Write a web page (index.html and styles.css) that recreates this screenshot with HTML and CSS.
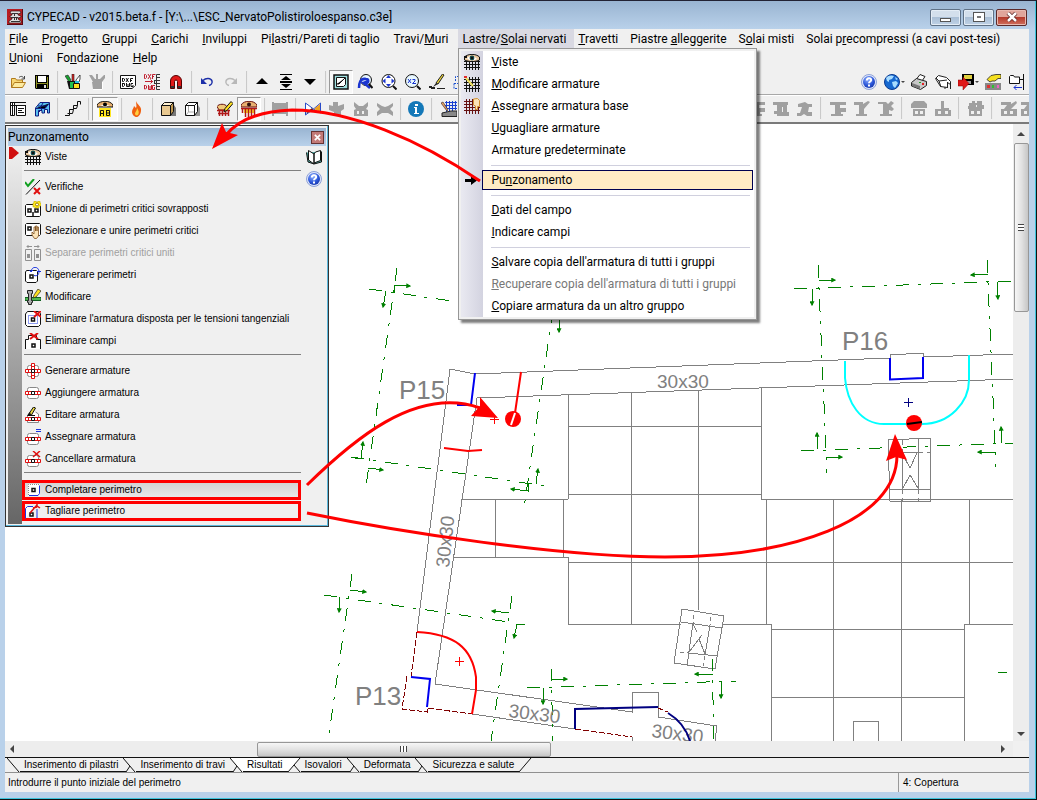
FILE: index.html
```html
<!DOCTYPE html>
<html lang="it">
<head>
<meta charset="utf-8">
<title>CYPECAD</title>
<link rel="stylesheet" href="styles.css">
</head>
<body>
<svg class="defs" aria-hidden="true">
  <defs>
    <radialGradient id="blueball" cx="0.4" cy="0.3" r="0.8"><stop offset="0" stop-color="#8fb0ff"/><stop offset="0.6" stop-color="#2a55d8"/><stop offset="1" stop-color="#1230a0"/></radialGradient>
    <symbol id="i-app" viewBox="0 0 16 16"><path fill="#b81c22" d="M0 0h16v16H0z"/><path fill="#5c0a10" d="M0 15h16v1H0zM15 0h1v16h-1z"/><path fill="#ddd" stroke="#311" stroke-width=".7" d="M4 2h9l1 2-3 1v1l3 1v1l-3 1v1l3 2v2H2v-2l3-2V9L3 8V7l2-1V5L3 4z"/><path stroke="#333" d="M5 4.500h6M4 8.500h7M4 12.500h9M7.500 5v2M7.500 9v2M9.500 9v2"/></symbol>
    <symbol id="i-open" viewBox="0 0 16 16"><path fill="#f7d774" stroke="#b07a1c" d="M1.500 13.500v-9h4l1 1.500h6v3"/><path fill="#fdeba0" stroke="#b07a1c" d="M1.500 13.500l3-5h11l-3 5z"/><path fill="none" stroke="#444" d="M9 3.500c2-2 4-1 5 1M14.500 2v3h-3"/></symbol>
    <symbol id="i-save" viewBox="0 0 16 16"><path d="M1 1h14v14H2l-1-1z"/><path fill="#8d8f20" d="M2 2h1v12H2zM13 3h1v11h-1zM3 9h10v1H3z"/><path fill="#fff" d="M4 2h8v6H4z"/><path fill="#ddd" d="M10 11h2v3h-2z"/></symbol>
    <symbol id="i-tools" viewBox="0 0 16 16"><path fill="#18a030" stroke="#222" stroke-width=".6" d="M0 2l3-1 3 5-2 2z"/><path fill="#e02020" stroke="#222" stroke-width=".6" d="M7 0h2v7H7z"/><path fill="#fff" stroke="#222" stroke-width=".8" d="M15 1l-4 5v2h3l1-3z"/><path fill="#111" d="M2 7h10l-1 8H4z"/><path fill="#20c050" d="M5 8h4v6H5z"/><path fill="#20c0e0" d="M10 7h4v2h-4z"/><path fill="#ffe020" stroke="#111" d="M8.500 9.500h6v5h-6z"/></symbol>
    <symbol id="i-toolsg" viewBox="0 0 16 16"><path fill="#a0a0a0" d="M0 1h3l3 4h1V0h2v5h2l4-4h1v3l-3 4h1l-1 7H4L3 8h1z"/><path fill="#fff" d="M4 15h9v1H4zM13 8h1v7h-1z"/></symbol>
    <symbol id="i-dxf" viewBox="0 0 16 16"><path fill="#fff" stroke="#111" d="M.500 1.500h15v10l-3 3H.500z"/><path fill="#999" d="M12 12h3l-3 3z"/><path stroke="#111" fill="none" d="M2.500 4v3.500h1l1-1V5l-1-.5h-1M6 4l2.500 4M8.500 4L6 8M10.500 8V4.500H13M10 6.500h2M2.500 9v3.500h1l1-1V9.500h-2M6.500 9v3.500h3V9M8 10v2M13 9.500h-2v3h2V11"/></symbol>
    <symbol id="i-dwg" viewBox="0 0 16 16"><path stroke="#c02030" fill="none" d="M.500.500v4h1l1-1v-2l-1-1h-1M4 0l3 5M7 0L4 5M8.500 5V.500h3M8 2.500h2M.500 11v4h1l1-1v-2l-1-.5h-1M4.500 11v4.500h3V11M6 12v3M11 11.500H8.500v4h2V13M1 7.500h8M6.500 5.500l2 2-2 2"/><path stroke="#333" fill="none" d="M16 .500h-3.500v15H16M12 3.500h4M10 6.500h6M10 9.500h6M12 12.500h4M10.500 6v4"/></symbol>
    <symbol id="i-magnet" viewBox="0 0 16 16"><path fill="#e01818" stroke="#500" d="M2.500 14.500V7a5.500 5.500 0 0 1 11 0v7.500h-4V7.500a1.500 1.500 0 0 0-3 0v7z"/><path fill="#333" d="M3 12h3v2H3zM10 12h3v2h-3z"/></symbol>
    <symbol id="i-undo" viewBox="0 0 16 16"><path fill="none" stroke="#1c2fa8" stroke-width="1.500" d="M4 6.500C7 3.500 12 4 13 7c.5 2-1 4-3 4.500"/><path fill="#1c2fa8" d="M2 4v6h6z"/></symbol>
    <symbol id="i-redo" viewBox="0 0 16 16"><path fill="none" stroke="#b8b8b8" stroke-width="1.500" d="M12 6.500C9 3.500 4 4 3 7c-.5 2 1 4 3 4.500"/><path fill="#b8b8b8" d="M14 4v6H8z"/></symbol>
    <symbol id="i-up" viewBox="0 0 16 16"><path d="M8 4l6 6H2z"/></symbol>
    <symbol id="i-down" viewBox="0 0 16 16"><path d="M8 11l6-6H2z"/></symbol>
    <symbol id="i-updown" viewBox="0 0 16 16"><path d="M2 0h12v1H2zM8 2l5 4H3zM2 7h12v2H2zM3 10h10l-5 4zM2 15h12v1H2z"/></symbol>
    <symbol id="i-win" viewBox="0 0 16 16"><path fill="#9fe0e0" stroke="#111" stroke-width="1.500" d="M1 1h14v14H1z"/><path fill="#fff" stroke="#111" d="M3.500 3.500h9v7l-2 2h-7z"/><path stroke="#111" d="M4 10l2 0 6-6"/></symbol>
    <symbol id="i-zprev" viewBox="0 0 16 16"><circle cx="9" cy="6" r="5.500" fill="#e8f6ff" stroke="#111"/><path stroke="#1a34d0" stroke-width="2.500" fill="none" d="M2 14c0-5 1-10 7-9 3 0 3 4 0 4H7l6 5"/><path fill="#1a34d0" d="M4 9l6-3v6z"/><path stroke="#111" stroke-width="2" d="M12 10l3.500 4"/></symbol>
    <symbol id="i-zall" viewBox="0 0 16 16"><circle cx="7.500" cy="7" r="6.500" fill="#fff" stroke="#111"/><path fill="#1a34d0" d="M7.500 1l2.500 3H5zM7.500 13l2.500-3H5zM1.500 7l3-2.500v5zM13.500 7l-3-2.500v5z"/><path stroke="#111" stroke-width="2" d="M12 12l3.500 3.500"/></symbol>
    <symbol id="i-z2" viewBox="0 0 16 16"><circle cx="7" cy="7" r="6.500" fill="#e8f8ff" stroke="#111"/><path stroke="#1a34d0" fill="none" d="M3 5l3 4M6 5L3 9M7.500 5.500h2.500v1.500L7.500 9.500H11"/><path stroke="#111" stroke-width="2" d="M12 12l3.500 3.500"/></symbol>
    <symbol id="i-brush" viewBox="0 0 16 16"><path fill="#f0d838" stroke="#222" d="M13.500 0l1.500 1-6 9-2-1z"/><path fill="#222" d="M9 10l-5 3 3-4zM0 12h3v1h3v2H2v-1H0zM8 14h8v1H8z"/></symbol>
    <symbol id="i-hand" viewBox="0 0 16 16"><path fill="none" stroke="#1a50d0" stroke-dasharray="2 1" d="M2.500 7V2.500H14M1 9.500h14v5H1z"/></symbol>
    <symbol id="i-help" viewBox="0 0 16 16"><circle cx="8" cy="8" r="7.500" fill="#dfe6fa" stroke="#8ea2d8"/><circle cx="8" cy="8" r="6" fill="url(#blueball)"/><path fill="none" stroke="#fff" stroke-width="2" d="M5.800 6.500c0-3 4.400-3 4.400-.5 0 1.500-2.200 1.500-2.200 3.200"/><path fill="#fff" d="M7 10.500h2v2H7z"/></symbol>
    <symbol id="i-globe" viewBox="0 0 16 16"><circle cx="8" cy="8" r="7.500" fill="#1668d0" stroke="#0a3a90"/><path fill="#a8dcff" d="M2 4c2-3 6-3 8-2l-2 3-3 1v2L3 7zM8 8l4-1 2 2-3 5-2-2zM11 3l3 2-2 1z"/></symbol>
    <symbol id="i-print" viewBox="0 0 16 16"><path fill="#fff" stroke="#222" d="M5.500 5L9 .500l5 2L11 7z"/><path fill="#c8c8c8" stroke="#222" d="M.500 8.500l5-4 10 3v4l-6 4-9-3.500z"/><path fill="#777" d="M1 9l8 3v3l-8-3z"/><path fill="#e02020" d="M11 9h2v2h-2z"/><path fill="#20a020" d="M8 8h2v1H8z"/></symbol>
    <symbol id="i-plot" viewBox="0 0 16 16"><path fill="#fff" stroke="#222" d="M.500 4.500l3-3 8 2 4 4v3l-3-2v5l-7-1z"/><path stroke="#222" fill="none" d="M1 4l3 3 2 6M4 7l8-1M12.500 8v6M15.500 10v5M10 13v2"/></symbol>
    <symbol id="i-export" viewBox="0 0 16 16"><path d="M4 0h12v11H4z"/><path fill="#e0d040" d="M6 1h8v4H6z"/><path fill="#999" d="M8 7h5v3H8z"/><path fill="#e01818" stroke="#800" stroke-width=".5" d="M0 6h5V3l6 6.500L5 16v-4H0z"/></symbol>
    <symbol id="i-config" viewBox="0 0 16 16"><path fill="#f5e020" stroke="#222" stroke-width=".8" d="M2 5.500L6 1.500l5-1h5v4h-3L10 7H7L5 8z"/><path fill="#888" d="M0 9h16v7H0z"/><path fill="#e03030" d="M2 11h3v3H2z"/><path fill="#30c030" d="M7 11h2v3H7z"/><path fill="#f060c0" d="M12 11h2v3h-2z"/></symbol>
    <symbol id="i-folderin" viewBox="0 0 16 16"><path fill="#fff" stroke="#111" d="M.500 9.500v-7l1-1h3l1 1.500h5v6.500z"/><path stroke="#111" d="M14.500 0v16M11 5.500h3"/><path fill="none" stroke="#1a34d0" d="M5 13.500h8M7.500 11L5 13.500 7.500 16"/></symbol>
    <symbol id="i-list" viewBox="0 0 16 16"><path fill="#fff" stroke="#111" d="M.500 1.500h4v13h-4zM6.500 4.500h9v10h-9z"/><path stroke="#111" d="M0 1.500h16M0 4.500h16M2.500 2v12M8 7.500h6M8 9.500h4M8 11.500h6"/></symbol>
    <symbol id="i-build" viewBox="0 0 16 16"><path fill="#58c0f0" stroke="#101c80" d="M1.500 15V7L6 1.500h9.500V12h-2V8.500h-3V12H8V9.500H4.500V15z"/><path stroke="#101c80" d="M1 7.500h10l4-5M4 5h9M9 2L6 7M5 11l3-3"/></symbol>
    <symbol id="i-stairs" viewBox="0 0 16 16"><path fill="none" stroke="#111" d="M15.500 .500h-3v4h-4v4h-4v4h-2M15.500 .500v3M12.500 4.500l-1 3h-3M8.500 8.500l-1 4h-3v2H0"/></symbol>
    <symbol id="i-eyeab" viewBox="0 0 16 16"><path fill="#e8b070" stroke="#111" d="M0 4c3-5 13-5 16 0v2H0z"/><path fill="#fff" d="M3 4h10L8 6z"/><circle cx="8" cy="3.500" r="2"/><path fill="#ffe620" d="M2 7h12v9H2z"/><path fill="none" stroke="#111" d="M3.500 15V9.500h3V15M4 12.500h2M9.500 9v5.500h3V9.500h-3M9.500 12h3"/></symbol>
    <symbol id="i-fire" viewBox="0 0 16 16"><path fill="#f06010" d="M7 0c1 4 6 5 5 10-.5 4-3 6-4.500 6S3 14 3 11c0-3 2-4 2-6l2 2c1-2 0-4 0-7z"/><path fill="#ffd040" d="M8 7c2 3 2 4 1.500 6-.5 2-3.500 2-3.500-.5C6 11 8 10 8 7z"/></symbol>
    <symbol id="i-cube" viewBox="0 0 16 16"><path fill="#777" d="M14 4l2 3v8H5l-2-1z"/><path fill="#e8c890" stroke="#111" d="M1.500 4.500h9v10h-9z"/><path fill="#fff0d0" stroke="#111" d="M1.500 4.500l3-3h9l-3 3z"/><path fill="#c09850" stroke="#111" d="M10.500 4.500l3-3v9l-3 4z"/></symbol>
    <symbol id="i-cubew" viewBox="0 0 16 16"><path fill="#999" d="M14 4l2 3v8H5l-2-1z"/><path fill="#fff" stroke="#111" d="M1.500 4.500h9v10h-9zM1.500 4.500l3-3h9l-3 3zM10.500 4.500l3-3v9l-3 4z"/><path fill="none" stroke="#aaa" d="M4.500 5v6L2 14M5 11h5"/></symbol>
    <symbol id="i-rpencil" viewBox="0 0 16 16"><path fill="#f0c878" stroke="#611" d="M0 5.500c2-3 8-3 10 0L8 9H2z"/><path stroke="#b01818" stroke-width="1.500" fill="none" d="M0 9.500h13M2.500 9v6M5.500 9v6M8.500 9v6M11.500 9v6M1 12.500h11"/><path fill="#ffe020" stroke="#111" d="M14 .500l2 2-6 7-3 1 1-3z"/></symbol>
    <symbol id="i-reye" viewBox="0 0 16 16"><path fill="#e8b070" stroke="#611" d="M0 4c3-5 13-5 16 0v2H0z"/><circle cx="8" cy="3.500" r="2" fill="#301010"/><path fill="#ffd820" d="M3 7h11v5H3z"/><path stroke="#b01818" stroke-width="1.500" fill="none" d="M0 7.500h16M1.500 7v5M4.500 8v8M7.500 8v8M10.500 8v8M13.500 8v7"/></symbol>
    <symbol id="i-g1" viewBox="0 0 16 16"><path fill="#a0a0a0" d="M0 1h2v1h12V1h2v14h-2v-2H2v2H0z"/></symbol>
    <symbol id="i-bow" viewBox="0 0 16 16"><path fill="#fff" stroke="#2a4bc8" d="M.500 2l8 6 7-6v10l-7-4-8 6z"/><path fill="#f0a020" d="M9 8l6-5v8z"/><path fill="#222" d="M0 13l7-6 1 2z"/></symbol>
    <symbol id="i-g2" viewBox="0 0 16 16"><path fill="#a0a0a0" d="M0 4l4 1V1h5v4l6-2v5l-3 2v5H5v-4L0 9z"/></symbol>
    <symbol id="i-g3" viewBox="0 0 16 16"><path fill="#a0a0a0" d="M1 1l5 4h4l5-4v4l-2 3 2 1v6H1V9l2-1-2-3z"/><path fill="#f0f0f0" d="M4 10h2v3H4zM9 10h2v3H9z"/></symbol>
    <symbol id="i-g4" viewBox="0 0 16 16"><path fill="#a0a0a0" d="M0 2l5 3 3 1 3-1 5-3v3l-3 3 3 3v4l-5-3H5l-5 3v-4l3-3-3-3z"/></symbol>
    <symbol id="i-info" viewBox="0 0 16 16"><circle cx="8" cy="8" r="8" fill="#1478b8"/><path fill="#fff" d="M7 3h3v2H7zM6 6h3v6h2v1H6v-1h1V7H6z"/></symbol>
    <symbol id="i-site" viewBox="0 0 16 16"><path stroke="#1a40d0" fill="none" d="M5.500 0v11M8.500 0v11M11.500 0v10M14.500 0v9M4 1.500h12M4 4.500h12M4 7.500h12"/><path fill="#888" stroke="#222" d="M1 12l9-2h6v5.500H1z"/><path fill="#f0a060" stroke="#222" stroke-width=".6" d="M0 2l2-1 5 8-1 1z"/></symbol>
    <symbol id="i-ga" viewBox="0 0 16 16"><path fill="#a0a0a0" d="M0 1h15v3h-1v7h2v4H4v-2H1v-3h3V4H0z"/><path fill="#f0f0f0" d="M9 6h1v5H9z"/></symbol>
    <symbol id="i-gb" viewBox="0 0 16 16"><path fill="#a0a0a0" d="M1 3l7-2 3 2h4v3h-3l-1 5h4v4h-5l-3-2-3 2H0v-3h3l2-6H1z"/></symbol>
    <symbol id="i-gc" viewBox="0 0 16 16"><path fill="#a0a0a0" d="M0 1h16v3h-6v3h6v4h-5v2h2v2H1v-2h4V4H0z"/></symbol>
    <symbol id="i-gd" viewBox="0 0 16 16"><path fill="#a0a0a0" d="M0 1h9v2l5-3 2 1-6 7v5h3v2H2v-2h3V4H0z"/></symbol>
    <symbol id="i-ge" viewBox="0 0 16 16"><path fill="#a0a0a0" d="M0 1h8l2 2 3-3 3 2-3 3 3 3-2 2-3-1v4h3v2H2v-2h3V3H0z"/></symbol>
    <symbol id="i-gf" viewBox="0 0 16 16"><path fill="#a0a0a0" d="M3 0h10l3 3v4h-2v8H2V7H0V3z"/><path fill="#f0f0f0" d="M2 7h12v1H2zM4 10h3v3H4zM9 10h3v3H9z"/></symbol>
    <symbol id="i-gg" viewBox="0 0 16 16"><path fill="#a0a0a0" d="M6 0h3v7h5v2h2v6H0V8h6z"/><path fill="#f0f0f0" d="M3 10h3v3H3zM10 10h3v3h-3z"/></symbol>
    <symbol id="i-gh" viewBox="0 0 16 16"><path fill="#a0a0a0" d="M1 2h3V0h3v2h2V0h5v4h2v4h-2v7H1V8H0V5h1z"/><path fill="#f0f0f0" d="M3 10h3v3H3zM9 10h3v3H9zM8 4h1v2H8z"/></symbol>
    <symbol id="i-gi" viewBox="0 0 16 16"><path fill="#a0a0a0" d="M0 1h10v2l5-3 1 2-6 6h6v7H0V8h3l3-4H0z"/><path fill="#f0f0f0" d="M3 10h3v3H3zM9 10h3v3H9z"/></symbol>
    <symbol id="i-viste" viewBox="0 0 16 16"><path stroke="#111" d="M0 7.500h16M0 10.500h16M0 13.500h16M2.500 5v11M5.500 5v11M8.500 5v11M11.500 5v11M14.500 5v11"/><path fill="#e8c8a0" stroke="#111" d="M.500 3C4-.500 12-.500 15.500 3v3c-4 2-11 2-15 0z"/><path fill="#fff" d="M3 4c3-3 8-2 10 1-3 2-8 2-10-1z"/><circle cx="8" cy="4" r="2.400" fill="#104848"/><path fill="#111" d="M0 2h3v2H0zM7 3h2v2H7z"/></symbol>
    <symbol id="i-modarm" viewBox="0 0 16 16"><path stroke="#111" d="M0 3.500h16M0 6.500h16M0 9.500h16M0 12.500h16M2.500 1v15M5.500 1v15M8.500 1v15M11.500 1v15M14.500 1v15"/><path stroke="#f0e060" stroke-width="2" d="M2 2l7 8"/><path fill="#e03030" d="M0 0h3v2H0z"/></symbol>
    <symbol id="i-assbase" viewBox="0 0 16 16"><path stroke="#611" d="M0 3.500h10M0 6.500h10M0 9.500h16M0 12.500h16M2.500 1v15M5.500 1v15M8.500 1v15M11.500 9v7M14.500 9v7"/><path fill="#fce4b8" stroke="#d09030" d="M9.500 1l4-.5 2 2v6h-2v3h-2V8l-2-1z"/></symbol>
    <symbol id="i-arrow" viewBox="0 0 16 16"><path d="M1 7h6V4l6 4.500L7 13v-3H1z"/></symbol>
    <symbol id="i-verif" viewBox="0 0 16 16"><path stroke="#111" d="M15 1L1 15.500"/><path fill="none" stroke="#10a020" stroke-width="2" d="M0 3l3 4 6-7"/><path fill="none" stroke="#e01010" stroke-width="2" d="M9 9l6 6M15 9l-6 6"/></symbol>
    <symbol id="i-unione" viewBox="0 0 16 16"><path fill="#fff" stroke="#111" d="M.500 4.500l1-1h13l1 1v10l-1 1h-13l-1-1z"/><path fill="none" stroke="#111" stroke-width="1.500" d="M3 8h3v3H3zM10 8h3v3h-3zM8 11v4"/><path fill="#ffe820" stroke="#b0a000" stroke-width=".5" d="M9 0h2v1h2V0h2v2h1v3h-2v2h-4V6H8V2h1z"/><circle cx="12" cy="3.500" r="1.500" fill="#fff" stroke="#a08000"/></symbol>
    <symbol id="i-selez" viewBox="0 0 16 16"><path fill="#fff" stroke="#111" d="M.500 1.500l1-1h13l1 1v10l-1 1h-13l-1-1z"/><path fill="none" stroke="#111" stroke-width="1.500" d="M3 4h3v3H3z"/><path fill="#fce4b8" stroke="#805020" stroke-width=".8" d="M7 9l2 2V4h1.500v4V3H12v5V4h1.500v9l-2 2.500h-2L7 12z"/></symbol>
    <symbol id="i-separ" viewBox="0 0 16 16"><path fill="none" stroke="#909090" d="M.500 4.500h6v11h-6zM9.500 4.500h6v11h-6zM2 1.500h5M9 1.500h5M3.500 0L2 1.500 3.500 3M12.500 0L14 1.500 12.500 3"/><path fill="#909090" d="M2 9h3v4H2zM11 9h3v4h-3z"/></symbol>
    <symbol id="i-rigen" viewBox="0 0 16 16"><path fill="#fff" stroke="#111" d="M.500 5l1-1.500h10l1 1V14l-1.500 1.500h-9L.500 14z"/><path fill="none" stroke="#111" stroke-width="1.500" d="M5 8h3v3H5z"/><path fill="none" stroke="#1a34e0" d="M6 4.500C7-1 13-1 14 4M12 4.500h4M4.500 3L6 5l2-2M9 8.500c3 1 5-1 5-4"/></symbol>
    <symbol id="i-modif" viewBox="0 0 16 16"><path fill="#50b850" stroke="#106020" d="M0 8.500h16v3H0z"/><path fill="#aaa" stroke="#222" d="M2.500 1.500h5v3h-1v7h1v2h-1v2h-3v-2h-1v-2h1v-7h-1z"/><path fill="#ffe020" stroke="#222" stroke-width=".7" d="M13 0l3 2-5 6-3 1 1-3z"/></symbol>
    <symbol id="i-elimarm" viewBox="0 0 16 16"><path fill="#fff" stroke="#111" d="M.500 3l2-2.500h11l2 2v11l-2 2h-11l-2-2z"/><path fill="none" stroke="#1a34e0" stroke-dasharray="1 1" d="M3.500 4.500h9v8h-9z"/><path fill="none" stroke="#111" stroke-width="1.500" d="M6.500 7h3v3h-3z"/><path stroke="#e01010" stroke-width="2" d="M9 0l7 6M16 0L9 6"/></symbol>
    <symbol id="i-elimcam" viewBox="0 0 16 16"><path fill="#fff" stroke="#111" d="M.500 16V6.500h3v-4h8v4h4V16"/><path fill="none" stroke="#111" stroke-width="1.500" d="M7 11h3v3H7z"/><path stroke="#e01010" stroke-width="2" d="M5 0l8 6M13 0L5 6"/></symbol>
    <symbol id="i-gener" viewBox="0 0 16 16"><rect x="2.500" y="2.500" width="11" height="11" rx="2" fill="#fff" stroke="#888"/><path fill="#fff" stroke="#e01010" d="M6.500.500h3v15h-3zM.500 6.500h15v3H.500zM6.500 3.500h3M6.500 12.500h3M3.500 6.500v3M12.500 6.500v3"/><path fill="#fff" stroke="#111" d="M6.500 6.500h3v3h-3z"/></symbol>
    <symbol id="i-aggiu" viewBox="0 0 16 16"><rect x="2.500" y="2.500" width="11" height="11" rx="2" fill="#fff" stroke="#888"/><path fill="#fff" stroke="#e01010" d="M.500 6.500h15v3H.500zM3.500 6.500v3M12.500 6.500v3"/><path fill="#fff" stroke="#111" d="M6.500 6.500h3v3h-3z"/></symbol>
    <symbol id="i-edita" viewBox="0 0 16 16"><path fill="#fff" stroke="#888" d="M2.500 8v7.500h11V7l-3-2"/><path fill="#fff" stroke="#e01010" d="M.500 10.500h15v3H.500zM3.500 10.500v3M12.500 10.500v3"/><path fill="#fff" stroke="#111" d="M6.500 10.500h3v3h-3z"/><path fill="#e8d840" stroke="#111" d="M8.500 0l2 1-4 7H4L3 8z"/><path fill="#111" d="M2 9l3-4 1 3h4v1z"/></symbol>
    <symbol id="i-assar" viewBox="0 0 16 16"><rect x="2.500" y="4.500" width="11" height="11" rx="2" fill="#fff" stroke="#888"/><path fill="#fff" stroke="#e01010" d="M.500 8.500h15v3H.500zM3.500 8.500v3M12.500 8.500v3"/><path fill="#fff" stroke="#111" d="M6.500 8.500h3v3h-3z"/><path fill="#1a34e0" d="M11 0h5v1h-5zM11 2h5v1h-5z"/></symbol>
    <symbol id="i-cancar" viewBox="0 0 16 16"><rect x="2.500" y="4.500" width="11" height="11" rx="2" fill="#fff" stroke="#888"/><path fill="#fff" stroke="#e01010" d="M.500 8.500h15v3H.500zM3.500 8.500v3M12.500 8.500v3"/><path fill="#fff" stroke="#111" d="M6.500 8.500h3v3h-3z"/><path stroke="#e01010" stroke-width="1.500" d="M8 0l7 6M15 0L8 6"/></symbol>
    <symbol id="i-compl" viewBox="0 0 16 16"><path fill="#fff" d="M3 2h12v12H3z"/><path fill="none" stroke="#1a34e0" d="M4 13.500h9l1.500-2v-8"/><path fill="none" stroke="#888" stroke-dasharray="1 1" d="M3.500 13V2.500H14"/><path fill="none" stroke="#111" stroke-width="1.500" d="M7 6.500h3v3H7z"/></symbol>
    <symbol id="i-tagli" viewBox="0 0 16 16"><path fill="#fff" stroke="#1a34e0" d="M.500 15.500v-10l2-2H8M12 6v9"/><path fill="#fff" stroke="#111" stroke-width="1.500" d="M5 10h3v3H5z"/><path fill="none" stroke="#e01010" stroke-width="1.500" d="M5 10l7-8M12 0v3l3 2M8 5l4-1"/></symbol>
    <symbol id="i-book" viewBox="0 0 16 16"><path fill="#4fb0a8" stroke="#111" d="M.500 3.500L2 13l6 2 7.500-2V2.500"/><path fill="#fff" stroke="#111" d="M2.500 1.500L8 5v10L2.500 11zM8 5l1.500-2 5-1.500v10L8 14z"/></symbol>
    <symbol id="i-xs" viewBox="0 0 8 8"><path stroke="#fff" stroke-width="2" d="M1 1l6 6M7 1L1 7"/></symbol>
    <marker id="tip" viewBox="0 0 4 4" refX="3" refY="2" markerWidth="5" markerHeight="5" markerUnits="userSpaceOnUse" orient="auto"><path fill="#008000" d="M0 0l4 2-4 2z"/></marker>
  </defs>
</svg>

<div class="window">
  <header class="titlebar">
    <svg class="ico"><use href="#i-app"/></svg>
    <h1 class="title">CYPECAD - v2015.beta.f - [Y:\...\ESC_NervatoPolistiroloespanso.c3e]</h1>
    <div class="caption">
      <button class="cap" aria-label="Riduci a icona"><span class="glyph-min"></span></button>
      <button class="cap" aria-label="Ingrandisci"><span class="glyph-max"></span></button>
      <button class="cap cap-close" aria-label="Chiudi"><svg width="12" height="10" viewBox="0 0 12 10"><path stroke="#5a2020" stroke-width="4" d="M2 1l8 8M10 1L2 9"/><path stroke="#fff" stroke-width="2.500" d="M2 1l8 8M10 1L2 9"/></svg></button>
    </div>
  </header>

  <div class="client">
    <nav class="menubar">
      <div class="mi"><button class="mbtn"><u>F</u>ile</button></div>
      <div class="mi"><button class="mbtn"><u>P</u>rogetto</button></div>
      <div class="mi"><button class="mbtn"><u>G</u>ruppi</button></div>
      <div class="mi"><button class="mbtn"><u>C</u>arichi</button></div>
      <div class="mi"><button class="mbtn"><u>I</u>nviluppi</button></div>
      <div class="mi"><button class="mbtn">Pi<u>l</u>astri/Pareti di taglio</button></div>
      <div class="mi"><button class="mbtn">Travi/<u>M</u>uri</button></div>
      <div class="mi mi-tight">
        <button class="mbtn mbtn-open" aria-expanded="true">Lastre/<u>S</u>olai nervati</button>
        <div class="dropdown">
          <button class="dd"><svg class="ico"><use href="#i-viste"/></svg><span><u>V</u>iste</span></button>
          <button class="dd"><svg class="ico"><use href="#i-modarm"/></svg><span><u>M</u>odificare armature</span></button>
          <button class="dd"><svg class="ico"><use href="#i-assbase"/></svg><span><u>A</u>ssegnare armatura base</span></button>
          <button class="dd"><i class="ico"></i><span><u>U</u>guagliare armature</span></button>
          <button class="dd"><i class="ico"></i><span>Armature <u>p</u>redeterminate</span></button>
          <hr class="dsep">
          <button class="dd dd-active"><svg class="ico"><use href="#i-arrow"/></svg><span>Pu<u>n</u>zonamento</span></button>
          <hr class="dsep">
          <button class="dd"><i class="ico"></i><span><u>D</u>ati del campo</span></button>
          <button class="dd"><i class="ico"></i><span><u>I</u>ndicare campi</span></button>
          <hr class="dsep">
          <button class="dd"><i class="ico"></i><span><u>S</u>alvare copia dell'armatura di tutti i gruppi</span></button>
          <button class="dd" disabled><i class="ico"></i><span><u>R</u>ecuperare copia dell'armatura di tutti i gruppi</span></button>
          <button class="dd"><i class="ico"></i><span><u>C</u>opiare armatura da un altro gruppo</span></button>
        </div>
      </div>
      <div class="mi mi-tight"><button class="mbtn"><u>T</u>ravetti</button></div>
      <div class="mi mi-tight"><button class="mbtn">Piastre <u>a</u>lleggerite</button></div>
      <div class="mi mi-tight"><button class="mbtn">S<u>o</u>lai misti</button></div>
      <div class="mi mi-tight"><button class="mbtn">Solai p<u>r</u>ecompressi (a cavi post-tesi)</button></div>
      <div class="mi"><button class="mbtn"><u>U</u>nioni</button></div>
      <div class="mi"><button class="mbtn">Fo<u>n</u>dazione</button></div>
      <div class="mi"><button class="mbtn"><u>H</u>elp</button></div>
    </nav>

    <div class="toolbar">
      <button class="tb" aria-label="Apri"><svg class="ico"><use href="#i-open"/></svg></button>
      <button class="tb" aria-label="Salva"><svg class="ico"><use href="#i-save"/></svg></button>
      <i class="ts"></i>
      <button class="tb" aria-label="Strumenti"><svg class="ico"><use href="#i-tools"/></svg></button>
      <button class="tb" aria-label="Strumenti gruppo" disabled><svg class="ico"><use href="#i-toolsg"/></svg></button>
      <i class="ts"></i>
      <button class="tb" aria-label="DXF"><svg class="ico"><use href="#i-dxf"/></svg></button>
      <button class="tb" aria-label="DXF DWG"><svg class="ico"><use href="#i-dwg"/></svg></button>
      <button class="tb" aria-label="Cattura"><svg class="ico"><use href="#i-magnet"/></svg></button>
      <i class="ts"></i>
      <button class="tb" aria-label="Annulla"><svg class="ico"><use href="#i-undo"/></svg></button>
      <button class="tb" aria-label="Ripeti" disabled><svg class="ico"><use href="#i-redo"/></svg></button>
      <i class="ts"></i>
      <button class="tb" aria-label="Sali"><svg class="ico"><use href="#i-up"/></svg></button>
      <button class="tb" aria-label="Vai al gruppo"><svg class="ico"><use href="#i-updown"/></svg></button>
      <button class="tb" aria-label="Scendi"><svg class="ico"><use href="#i-down"/></svg></button>
      <i class="ts"></i>
      <button class="tb tb-on" aria-label="Finestra"><svg class="ico"><use href="#i-win"/></svg></button>
      <button class="tb" aria-label="Zoom precedente"><svg class="ico"><use href="#i-zprev"/></svg></button>
      <button class="tb" aria-label="Zoom totale"><svg class="ico"><use href="#i-zall"/></svg></button>
      <button class="tb" aria-label="Zoom per due"><svg class="ico"><use href="#i-z2"/></svg></button>
      <button class="tb" aria-label="Ridisegna"><svg class="ico"><use href="#i-brush"/></svg></button>
      <button class="tb" aria-label="Stampa vista"><svg class="ico"><use href="#i-hand"/></svg></button>
      <div class="right">
        <button class="tb" aria-label="Aiuto"><svg class="ico"><use href="#i-help"/></svg></button>
        <button class="tb tb-drop" aria-label="Web"><svg class="ico"><use href="#i-globe"/></svg></button>
        <button class="tb" aria-label="Stampa"><svg class="ico"><use href="#i-print"/></svg></button>
        <button class="tb" aria-label="Disegni"><svg class="ico"><use href="#i-plot"/></svg></button>
        <button class="tb tb-drop" aria-label="Esporta"><svg class="ico"><use href="#i-export"/></svg></button>
        <button class="tb" aria-label="Configurazione"><svg class="ico"><use href="#i-config"/></svg></button>
        <button class="tb" aria-label="Esci"><svg class="ico"><use href="#i-folderin"/></svg></button>
      </div>
    </div>

    <div class="toolbar toolbar-2">
      <button class="tb" aria-label="Elenco"><svg class="ico"><use href="#i-list"/></svg></button>
      <button class="tb" aria-label="Struttura"><svg class="ico"><use href="#i-build"/></svg></button>
      <i class="ts"></i>
      <button class="tb" aria-label="Scale"><svg class="ico"><use href="#i-stairs"/></svg></button>
      <i class="ts"></i>
      <button class="tb tb-on tb-wide" aria-label="Vista testi"><svg class="ico"><use href="#i-eyeab"/></svg></button>
      <i class="ts"></i>
      <button class="tb" aria-label="Incendio"><svg class="ico"><use href="#i-fire"/></svg></button>
      <i class="ts"></i>
      <button class="tb" aria-label="Vista 3D"><svg class="ico"><use href="#i-cube"/></svg></button>
      <button class="tb" aria-label="Vista 3D gruppo"><svg class="ico"><use href="#i-cubew"/></svg></button>
      <i class="ts ts-9"></i>
      <button class="tb" aria-label="Modifica armature"><svg class="ico"><use href="#i-rpencil"/></svg></button>
      <button class="tb tb-on" aria-label="Vista armature"><svg class="ico"><use href="#i-reye"/></svg></button>
      <i class="ts"></i>
      <button class="tb" aria-label="Trave" disabled><svg class="ico"><use href="#i-g1"/></svg></button>
      <i class="ts ts-9"></i>
      <button class="tb" aria-label="Inviluppi"><svg class="ico"><use href="#i-bow"/></svg></button>
      <button class="tb" aria-label="Unisci" disabled><svg class="ico"><use href="#i-g2"/></svg></button>
      <button class="tb" aria-label="Copia" disabled><svg class="ico"><use href="#i-g3"/></svg></button>
      <button class="tb" aria-label="Dividi" disabled><svg class="ico"><use href="#i-g4"/></svg></button>
      <i class="ts"></i>
      <button class="tb" aria-label="Informazioni"><svg class="ico"><use href="#i-info"/></svg></button>
      <i class="ts ts-9"></i>
      <button class="tb" aria-label="Fondazione"><svg class="ico"><use href="#i-site"/></svg></button>
      <div class="right">
        <button class="tb" aria-label="Plinto" disabled><svg class="ico"><use href="#i-gc"/></svg></button>
        <button class="tb" aria-label="Plinto nuovo" disabled><svg class="ico"><use href="#i-ga"/></svg></button>
        <button class="tb" aria-label="Plinto ruotato" disabled><svg class="ico"><use href="#i-gb"/></svg></button>
        <i class="ts ts-9"></i>
        <button class="tb" aria-label="Cordolo" disabled><svg class="ico"><use href="#i-gc"/></svg></button>
        <button class="tb" aria-label="Modifica cordolo" disabled><svg class="ico"><use href="#i-gd"/></svg></button>
        <button class="tb" aria-label="Elimina cordolo" disabled><svg class="ico"><use href="#i-ge"/></svg></button>
        <i class="ts ts-9"></i>
        <button class="tb" aria-label="Pali" disabled><svg class="ico"><use href="#i-gf"/></svg></button>
        <button class="tb" aria-label="Palo singolo" disabled><svg class="ico"><use href="#i-gg"/></svg></button>
        <i class="ts ts-9"></i>
        <button class="tb" aria-label="Cerca" disabled><svg class="ico"><use href="#i-gh"/></svg></button>
        <i class="ts ts-9"></i>
        <button class="tb" aria-label="Modifica pali" disabled><svg class="ico"><use href="#i-gi"/></svg></button>
        <button class="tb tb-cut" aria-label="Altro" disabled><svg class="ico"><use href="#i-gi"/></svg></button>
      </div>
    </div>

    <main class="workspace">
      <svg class="plan" role="img" aria-label="Pianta">
        <g transform="translate(-5 -124)" fill="none">
          <g stroke="#808080" shape-rendering="crispEdges">
            <path d="M450 369L475 374 890 358M923 357L1013 354M890 358V354.500L923 353.500V357M477 398L1013 379M450 369L417 632M477 398L435 684M435 684L632 712V692H658V717L717 726 715 741M472 714L575 729M632 737v4"/>
            <path d="M461 499.500h107M568.500 394v105M495.500 499v58M563.500 499v58M453 557.500h115.500V624.500M568 426.500h193M568 494.500h193M631.500 392v232M698.500 390v220M761.500 387v112.500H1013M766.500 499v125M833.500 499v242M901.500 499v242M969.500 499v125M568 562.500h445M568 624.500h113M723 624.500h48.500V741M771 629.500h193M771 697.500h193M1013 624.500h-48.500V741M853.500 741v-20h25v20"/>
            <path d="M888 440L930 438 931 501H890zM902 452v37M918 438v51M890 489h41M902 452h16M902 453l8 15 7-15M903 488l7-13 8 13"/>
            <path stroke-dasharray="5 4" d="M902 440v12M918 452h12M902 489v12M918 489v12"/>
            <path d="M682 609L724 616 715 669 674 663zM681 622l41 6M689 653l28 3M693 623l-6 43M710 625l-5 30M693 624l4 8M702 635l-3 4-10 13M699 639l6 15"/>
            <path stroke-dasharray="4 3" d="M694 615l-1 8M710 617v8M680 652l9 1M705 656l-2 10"/>
          </g>
          <g stroke="#800000" shape-rendering="crispEdges">
            <path stroke-dasharray="6 2" d="M417 632L411 677M407 676L402 709 427 712V708L472 714M575 729L632 737M658 708l10 4"/>
          </g>
          <g stroke="#008000" shape-rendering="crispEdges">
            <g stroke-dasharray="13 9 3 9">
              <path d="M397 268L366 486M369 289L459 302M553 310L524 508M351 457L552 487"/>
              <path d="M818 265L827 473M794 289L1013 281M987 260L996 467M801 451L1013 443"/>
              <path d="M352 574L328 741M324 595L509 622M512 596L491 741"/>
              <path d="M551 668L553 741M527 688L736 681M712 658L714 741"/>
            </g>
            <path d="M998 672.500h9"/>
            <g marker-end="url(#tip)">
              <path d="M394 293L395 285 410 286"/><path d="M386 291L383 307"/><path d="M559 316V332"/><path d="M368 468L383 470"/><path d="M355 458L361 458 363 442"/><path d="M528 483V491L511 489"/><path d="M536 484L538 469"/>
              <path d="M819 280H835"/><path d="M812 289V305"/><path d="M988 274L971 275"/><path d="M997 282L998 299"/><path d="M817 449V433"/><path d="M826 457H842"/><path d="M995 452H978"/><path d="M1002 443L1001 427"/>
              <path d="M350 590L366 592"/><path d="M340 597L339 612"/><path d="M509 613L492 611"/><path d="M525 624H517L514 638"/>
              <path d="M551 679H567"/><path d="M543 688V704"/><path d="M713 674H695"/><path d="M721 682V698"/>
            </g>
          </g>
          <g fill="#808080" class="lbl">
            <text class="lbl-p" x="399" y="399">P15</text>
            <text class="lbl-p" x="842" y="350">P16</text>
            <text class="lbl-p" x="355" y="705">P13</text>
            <text x="657" y="388">30x30</text>
            <text transform="translate(449 568) rotate(-84)">30x30</text>
            <text transform="translate(508 717) rotate(7)">30x30</text>
            <text transform="translate(651 737) rotate(7)">30x30</text>
          </g>
          <g stroke="#0000f0" stroke-width="2">
            <path d="M890 358V379.500L923 378V357M475 373L471 405 457 405M411 677L430 679 427 707"/>
          </g>
          <g stroke="#000080" stroke-width="2">
            <path d="M575 729V709L658 707M668 713C678 719 686 728 690 741"/>
            <path stroke-width="1" d="M904 402.500h9M908.500 398v9"/>
          </g>
          <path stroke="#00ffff" stroke-width="2" d="M845 361V378C847 402 860 424 884 424H922C950 424 969 402 969 380V355"/>
          <g stroke="#ff0000" stroke-width="2">
            <path d="M417 632C455 634 472 648 476 677V690L472 714M521 372L515 413M444 448L468 451 482 450"/>
            <path stroke-width="1" shape-rendering="crispEdges" d="M455 661.500h9M459.500 657v9M490 419.500h9M494.500 415v9"/>
          </g>
          <circle cx="513" cy="419" r="8" fill="#f00"/><path stroke="#fff" stroke-width="2" d="M515 413L511 425"/>
          <circle cx="914" cy="423" r="8" fill="#f00"/><path stroke="#000" stroke-width="2" d="M907 424L922 422"/>
        </g>
      </svg>

      <div class="vscroll">
        <i class="tri tri-up"></i>
        <div class="vthumb"><i class="grip-v"></i></div>
        <i class="tri tri-down"></i>
      </div>
      <div class="hscroll">
        <i class="tri tri-left"></i>
        <div class="hthumb"><i class="grip-h"></i></div>
        <i class="tri tri-right"></i>
      </div>

      <section class="panel">
        <header class="panel-head"><h2 class="panel-title">Punzonamento</h2><button class="panel-x" aria-label="Chiudi pannello"><svg width="7" height="7" viewBox="0 0 8 8"><use href="#i-xs"/></svg></button></header>
        <div class="panel-body">
          <div class="strip"><i class="mark"></i></div>
          <div class="items">
            <button class="pi"><svg class="ico"><use href="#i-viste"/></svg>Viste</button>
            <hr class="psep">
            <button class="pi"><svg class="ico"><use href="#i-verif"/></svg>Verifiche</button>
            <button class="pi"><svg class="ico"><use href="#i-unione"/></svg>Unione di perimetri critici sovrapposti</button>
            <button class="pi"><svg class="ico"><use href="#i-selez"/></svg>Selezionare e unire perimetri critici</button>
            <button class="pi" disabled><svg class="ico"><use href="#i-separ"/></svg>Separare perimetri critici uniti</button>
            <button class="pi"><svg class="ico"><use href="#i-rigen"/></svg>Rigenerare perimetri</button>
            <button class="pi"><svg class="ico"><use href="#i-modif"/></svg>Modificare</button>
            <button class="pi"><svg class="ico"><use href="#i-elimarm"/></svg>Eliminare l'armatura disposta per le tensioni tangenziali</button>
            <button class="pi"><svg class="ico"><use href="#i-elimcam"/></svg>Eliminare campi</button>
            <hr class="psep">
            <button class="pi"><svg class="ico"><use href="#i-gener"/></svg>Generare armature</button>
            <button class="pi"><svg class="ico"><use href="#i-aggiu"/></svg>Aggiungere armatura</button>
            <button class="pi"><svg class="ico"><use href="#i-edita"/></svg>Editare armatura</button>
            <button class="pi"><svg class="ico"><use href="#i-assar"/></svg>Assegnare armatura</button>
            <button class="pi"><svg class="ico"><use href="#i-cancar"/></svg>Cancellare armatura</button>
            <hr class="psep">
            <button class="pi pi-box pi-hot"><svg class="ico"><use href="#i-compl"/></svg>Completare perimetro</button>
            <button class="pi pi-box"><svg class="ico"><use href="#i-tagli"/></svg>Tagliare perimetro</button>
          </div>
          <div class="side">
            <button class="sb" aria-label="Manuale"><svg class="ico"><use href="#i-book"/></svg></button>
            <button class="sb" aria-label="Aiuto"><svg class="ico"><use href="#i-help"/></svg></button>
          </div>
        </div>
      </section>
    </main>

    <div class="tabs">
      <svg class="slant"><path d="M0 0l12 14"/></svg>
      <button class="tab">Inserimento di pilastri</button>
      <svg class="slant"><path d="M0 0l12 14M3 14l4-6M0 13.500h3"/></svg>
      <button class="tab">Inserimento di travi</button>
      <svg class="slant"><path fill="#fff" stroke="none" d="M0 0h13v14h-1z"/><path d="M0 0l12 14M3 14l4-6M0 13.500h3"/></svg>
      <button class="tab tab-on">Risultati</button>
      <svg class="slant"><path fill="#fff" stroke="none" d="M0 0h12L0 14z"/><path d="M12 0L0 14M6 7l6 7"/></svg>
      <button class="tab">Isovalori</button>
      <svg class="slant"><path d="M0 0l12 14M3 14l4-6M0 13.500h3"/></svg>
      <button class="tab">Deformata</button>
      <svg class="slant"><path d="M0 0l12 14M3 14l4-6M0 13.500h3"/></svg>
      <button class="tab">Sicurezza e salute</button>
      <svg class="slant"><path d="M12 0L0 14"/></svg>
    </div>
    <footer class="status"><span class="msg">Introdurre il punto iniziale del perimetro</span><span class="cell">4: Copertura</span></footer>
  </div>

  <svg class="notes" aria-hidden="true">
    <g fill="none" stroke="#f00" stroke-width="3">
      <path d="M480 181C420 140 350 110 292 110 262 111 240 118 226 135"/>
      <path d="M307 485C350 443 415 385 480 408"/>
      <path d="M307 513C400 532 560 557 665 557 790 557 897 522 897 455"/>
    </g>
    <path fill="#f00" d="M212 149L222 123 226 132 238 135zM498 418L480 397 480 406 471 416zM895 434L886 461 896 457 907 460z"/>
  </svg>
</div>
</body>
</html>
```
FILE: styles.css
```css
* { box-sizing: border-box; }
body { margin: 0; color: #000; font-family: Roboto, "Liberation Sans", sans-serif; font-size: 12px; line-height: 16px; }
button { font: inherit; color: inherit; background: none; border: 0; padding: 0; margin: 0; text-align: left; white-space: nowrap; }
hr { margin: 0; border: 0; }
.defs { position: absolute; width: 0; height: 0; }
.ico { display: block; flex: none; width: 16px; height: 16px; }

.window { position: relative; display: flex; flex-direction: column; min-height: 100vh; padding: 0 7px 7px 5px; background: #b9d1ea; border-top: 1px solid #223; border-right: 1px solid #111; border-bottom: 1px solid #111; box-shadow: inset -1px -1px 0 #3cc4dc; overflow: hidden; }
.titlebar { display: flex; align-items: center; gap: 4px; height: 28px; padding: 4px 2px 0 7px; margin: 0 -6px 0 -5px; background: linear-gradient(#99b4d1, #b9d1ea); }
.title { flex: 1; margin: 0; font-size: 12px; font-weight: 400; line-height: 16px; }
.caption { display: flex; gap: 2px; padding-right: 6px; }
.cap { display: flex; align-items: center; justify-content: center; width: 31px; height: 17px; border: 1px solid #5f7186; border-radius: 2px; background: linear-gradient(#d3dfec 45%, #aabfd6 50%, #bfd2e6); box-shadow: inset 0 0 0 1px #e4edf6; }
.cap-close { border-color: #5c2a2a; background: linear-gradient(#e0a59b 45%, #b53a2c 50%, #d0705e); box-shadow: inset 0 0 0 1px #e8b9b0; }
.glyph-min { width: 11px; height: 4px; margin-top: 5px; background: #fff; border: 1px solid #555; }
.glyph-max { width: 10px; height: 8px; border: 3px solid #fff; background: #777; outline: 1px solid #555; }

.client { flex: 1; display: flex; flex-direction: column; background: #f0f0f0; }
.menubar { display: flex; flex-wrap: wrap; padding: 0 0 3px; }
.mi { position: relative; margin-right: 2px; }
.mi-tight { margin-right: 0; }
.mbtn { height: 19px; padding: 1px 8px 0 4px; line-height: 18px; }
.mbtn-open { background: #d9d9e2; }

.dropdown { position: absolute; z-index: 5; left: 0; top: 100%; width: 299px; padding: 2px; background: linear-gradient(90deg, #e8e8f0 3px, #d3d3e0 24px, #fff 24px) 0 0 no-repeat #fff; border: 1px solid #979797; box-shadow: inset 0 0 0 2px #f0f0f0, 3px 3px 2px rgba(0, 0, 0, 0.5); }
.dd { display: grid; grid-template-columns: 16px 1fr; gap: 2px; align-items: center; width: 100%; height: 22px; padding: 0 1px 0 3px; line-height: 18px; }
.dd span { padding: 0 8px; height: 20px; border: 1px solid transparent; }
.dd-active span { background: #ffebc4; border-color: #000050; }
.dd:disabled { color: #777; }
.dsep { height: 8px; margin: 0 4px 0 30px; background: linear-gradient(#d0d0de, #d0d0de) 0 4px / 100% 1px no-repeat; }

.toolbar { display: flex; align-items: center; height: 25px; padding-left: 1px; border-bottom: 1px solid #a8a8a8; overflow: hidden; }
.toolbar-2 { height: 29px; border-bottom: 2px solid #7a7a7a; box-shadow: inset 0 1px 0 #fff; }
.tb { display: flex; flex: none; align-items: center; justify-content: center; width: 24px; height: 24px; }
.tb-on { background: #f8f8f8; border: 1px solid; border-color: #9a9a9a #fff #fff #9a9a9a; }
.tb-wide { width: 26px; }
.tb-drop { width: 26px; gap: 1px; }
.tb-drop::after { content: ""; border: 2px solid transparent; border-top-color: #444; border-bottom: 0; }
.tb-cut { width: 8px; overflow: hidden; justify-content: flex-start; }
.ts { flex: none; width: 7px; height: 22px; background: linear-gradient(90deg, #b8b8b8, #fff) 3px 0 / 2px 100% no-repeat; }
.ts-9 { width: 9px; }
.right { display: flex; margin-left: auto; }

.workspace { position: relative; flex: 1; display: grid; grid-template: minmax(0, 1fr) 16px / minmax(0, 1fr) 16px; background: #f0f0f0; }
.plan { display: block; width: 100%; height: 100%; min-height: 0; background: #fff; }
.lbl { font: 19px "Liberation Sans", Arial, sans-serif; }
.lbl-p { font-size: 26px; }

.vscroll { display: flex; flex-direction: column; align-items: center; padding: 8px 0 5px; background: #ededed; }
.vthumb { display: flex; flex: none; align-items: center; justify-content: center; width: 15px; height: 28%; margin-top: 7px; margin-bottom: auto; border: 1px solid #979797; border-radius: 2px; background: linear-gradient(90deg, #f6f6f6, #e2e2e2 50%, #c6c6c6); }
.hscroll { display: flex; align-items: center; padding: 0 8px 0 5px; background: #ededed; }
.hthumb { display: flex; align-items: center; justify-content: center; width: 294px; height: 15px; margin-left: 24%; margin-right: auto; border: 1px solid #979797; border-radius: 2px; background: linear-gradient(#f6f6f6, #e2e2e2 50%, #c6c6c6); }
.grip-h { width: 7px; height: 6px; background: repeating-linear-gradient(90deg, #444 0 1px, #fff 1px 3px); }
.grip-v { width: 6px; height: 7px; background: repeating-linear-gradient(#444 0 1px, #fff 1px 3px); }
.tri { flex: none; border: 4px solid transparent; }
.tri-up { border-top: 0; border-bottom-color: #444; }
.tri-down { border-bottom: 0; border-top-color: #444; }
.tri-left { border-left: 0; border-right-color: #444; margin-right: 4px; }
.tri-right { border-right: 0; border-left-color: #444; }

.panel, .tabs, .status { font-family: "Liberation Sans", Arial, sans-serif; font-size: 10px; }
.panel { position: absolute; left: 0; top: 1px; width: 324px; padding: 2px; background: #f0f0f0; border: 1px solid #333; box-shadow: inset -1px -1px 0 #5cb8dc; line-height: 14px; }
.panel-head { display: flex; align-items: center; justify-content: space-between; height: 18px; padding-right: 2px; background: linear-gradient(#99b4d1, #b9d1ea); }
.panel-title { margin: 0; font: 12px/16px Roboto, "Liberation Sans", sans-serif; }
.panel-x { display: flex; align-items: center; justify-content: center; width: 13px; height: 13px; border: 1px solid #633; background: #c27a78; }
.panel-body { display: flex; padding-bottom: 2px; }
.strip { width: 14px; margin-bottom: -2px; background: linear-gradient(#f0f0f0, #666); }
.mark { display: block; width: 10px; height: 12px; margin-top: 1px; margin-left: 1px; background: #d01010; clip-path: polygon(0 0, 30% 0, 100% 50%, 30% 100%, 0 100%); }
.items { flex: none; display: flex; flex-direction: column; width: 279px; }
.pi { display: flex; align-items: center; gap: 4px; height: 22px; padding-left: 3px; }
.pi:disabled { color: #a0a0a0; }
.psep { height: 8px; margin: 0 0 0 2px; background: linear-gradient(#808080, #808080) 0 2px / 100% 1px no-repeat; }
.pi-box { height: 20px; padding-left: 0; border: 3px solid #f00; margin-bottom: 1px; }
.pi-hot { margin-top: 2px; background: linear-gradient(#d4d4d4, #e8e8e8); }
.side { display: flex; flex: 1; flex-direction: column; align-items: center; gap: 6px; padding-top: 3px; }
.sb { width: 16px; height: 16px; }

.tabs { display: flex; height: 15px; padding-left: 2px; border-top: 1px solid #111; line-height: 13px; }
.tab { height: 14px; padding: 0 5px 0 4px; border-bottom: 1px solid #111; line-height: 13px; }
.tab-on { background: #fff; }
.slant { flex: none; width: 13px; height: 14px; fill: none; stroke: #111; }
.status { display: flex; height: 20px; border-top: 1px solid #909090; line-height: 20px; }
.msg { flex: 1; padding-left: 3px; }
.cell { width: 131px; padding-left: 4px; border-left: 1px solid #999; }

.notes { position: absolute; z-index: 9; left: 0; top: -1px; width: 100%; height: 100%; overflow: visible; pointer-events: none; }
```
